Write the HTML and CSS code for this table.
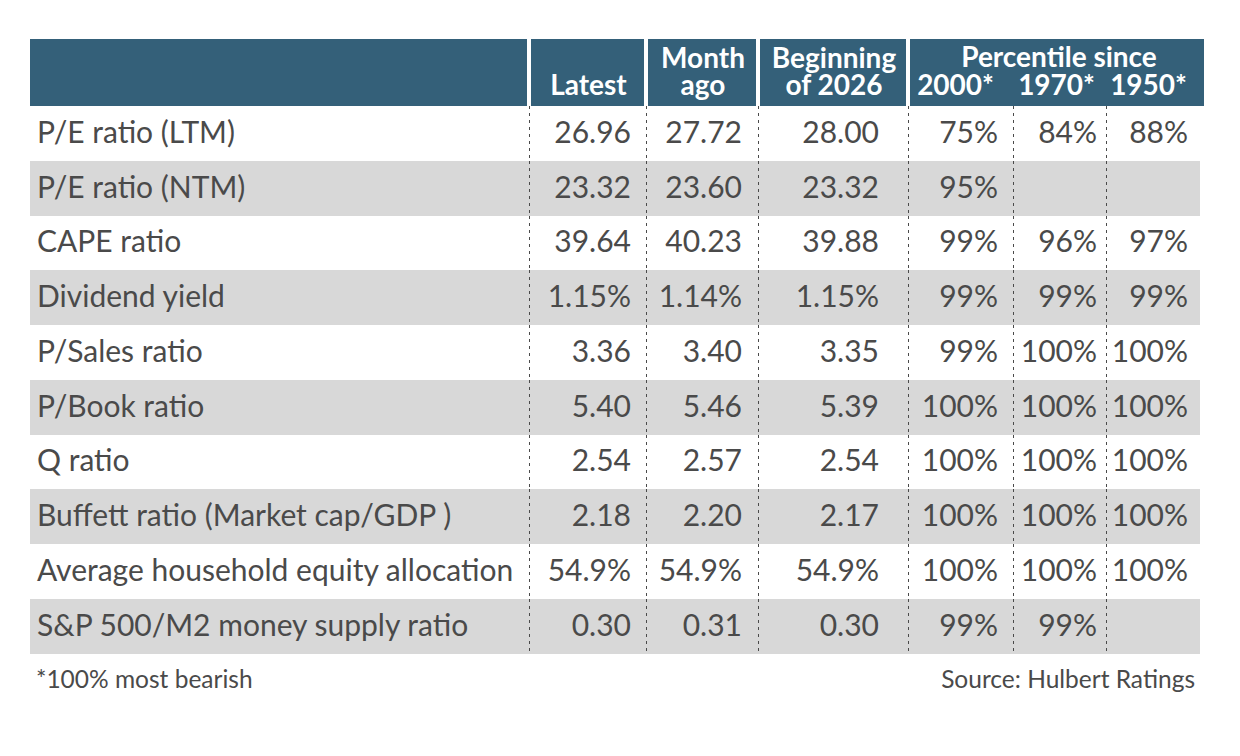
FILE: index.html
```html
<!DOCTYPE html>
<html lang="en">
<head>
<meta charset="utf-8">
<title>Valuation indicators</title>
<link rel="stylesheet" href="styles.css">
</head>
<body>
<div class="wrap">
  <div class="head">
    <div class="hc h-blank"></div>
    <div class="hc h-main h-latest"><span>Latest</span></div>
    <div class="hc h-main h-month"><span>Month</span><span>ago</span></div>
    <div class="hc h-main h-begin"><span>Beginning</span><span>of 2026</span></div>
    <div class="hc h-group"><span>Percentile since</span></div>
    <div class="hc h-yr y2000"><span>2000*</span></div>
    <div class="hc h-yr y1970"><span>1970*</span></div>
    <div class="hc h-yr y1950"><span>1950*</span></div>
  </div>
  <table class="val">
    <colgroup>
      <col class="c-label"><col class="c-latest"><col class="c-month"><col class="c-begin"><col class="c-p2000"><col class="c-p1970"><col class="c-p1950">
    </colgroup>
    <tbody>
      <tr><td>P/E ratio (LTM)</td><td>26.96</td><td>27.72</td><td>28.00</td><td>75%</td><td>84%</td><td>88%</td></tr>
      <tr class="alt"><td>P/E ratio (NTM)</td><td>23.32</td><td>23.60</td><td>23.32</td><td>95%</td><td></td><td></td></tr>
      <tr><td>CAPE ratio</td><td>39.64</td><td>40.23</td><td>39.88</td><td>99%</td><td>96%</td><td>97%</td></tr>
      <tr class="alt"><td>Dividend yield</td><td>1.15%</td><td>1.14%</td><td>1.15%</td><td>99%</td><td>99%</td><td>99%</td></tr>
      <tr><td>P/Sales ratio</td><td>3.36</td><td>3.40</td><td>3.35</td><td>99%</td><td>100%</td><td>100%</td></tr>
      <tr class="alt"><td>P/Book ratio</td><td>5.40</td><td>5.46</td><td>5.39</td><td>100%</td><td>100%</td><td>100%</td></tr>
      <tr><td>Q ratio</td><td>2.54</td><td>2.57</td><td>2.54</td><td>100%</td><td>100%</td><td>100%</td></tr>
      <tr class="alt"><td>Buffett ratio (Market cap/GDP )</td><td>2.18</td><td>2.20</td><td>2.17</td><td>100%</td><td>100%</td><td>100%</td></tr>
      <tr><td>Average household equity allocation</td><td>54.9%</td><td>54.9%</td><td>54.9%</td><td>100%</td><td>100%</td><td>100%</td></tr>
      <tr class="alt"><td>S&amp;P 500/M2 money supply ratio</td><td>0.30</td><td>0.31</td><td>0.30</td><td>99%</td><td>99%</td><td></td></tr>
    </tbody>
  </table>
  <div class="foot">
    <span>*100% most bearish</span>
    <span>Source: Hulbert Ratings</span>
  </div>
</div>
</body>
</html>
```

FILE: styles.css
```css
html, body {
  margin: 0;
  padding: 0;
  background: #ffffff;
}

body {
  font-family: Lato, "Open Sans", "Liberation Sans", sans-serif;
  color: #4a4a4a;
}

.wrap {
  width: 1170px;
  padding: 39px 0 0 30px;
}

/* header */
.head {
  display: grid;
  grid-template-columns: 499px 117px 112px 150px 105px 93px 94px;
  grid-template-rows: 31px 36px;
  color: #ffffff;
  font-weight: 700;
  font-size: 28px;
  line-height: 27px;
  white-space: nowrap;
}

.hc {
  background: #346079;
  display: flex;
  flex-direction: column;
  align-items: center;
  justify-content: flex-end;
  box-sizing: border-box;
}

.h-blank {
  grid-column: 1;
  grid-row: 1 / 3;
}

.h-main {
  grid-row: 1 / 3;
  border-left: 4px solid #ffffff;
  margin-left: -2px;
  padding-bottom: 8px;
}

.h-latest { grid-column: 2; }
.h-month { grid-column: 3; }
.h-begin { grid-column: 4; }

.h-group {
  grid-column: 5 / 8;
  grid-row: 1;
  border-left: 4px solid #ffffff;
  margin-left: -2px;
  margin-right: -4px;
  padding-left: 4px;
}

.h-yr {
  grid-row: 2;
  align-items: flex-end;
  padding-bottom: 8px;
}

.y2000 {
  grid-column: 5;
  border-left: 4px solid #ffffff;
  margin-left: -2px;
  padding-right: 19px;
}

.y1970 {
  grid-column: 6;
  padding-right: 11px;
}

.y1950 {
  grid-column: 7;
  margin-right: -4px;
  padding-right: 17px;
}

/* body */
.val {
  width: 1170px;
  table-layout: fixed;
  border-collapse: collapse;
  border-spacing: 0;
}

.c-label { width: 499px; }
.c-latest { width: 117px; }
.c-month { width: 112px; }
.c-begin { width: 150px; }
.c-p2000 { width: 105px; }
.c-p1970 { width: 93px; }
.c-p1950 { width: 94px; }

.val td {
  font-size: 30px;
  height: 49.75px;
  padding: 0 0 5px 0;
  vertical-align: middle;
  text-align: right;
  white-space: nowrap;
  line-height: 30px;
}

.val td:first-child {
  text-align: left;
  padding-left: 7px;
}

.val td + td {
  background-image: repeating-linear-gradient(to bottom, #4a4a4a 0 3px, transparent 3px 7px);
  background-size: 2px 100%;
  background-repeat: no-repeat;
  background-position: -1px 0;
}

.val td:nth-child(2) { padding-right: 15px; }
.val td:nth-child(3) { padding-right: 16px; }
.val td:nth-child(4) { padding-right: 29px; }
.val td:nth-child(5) { padding-right: 15px; }
.val td:nth-child(6) { padding-right: 9px; }
.val td:nth-child(7) { padding-right: 12px; }

.val tr.alt td {
  background-color: #d8d8d8;
}

.foot {
  display: flex;
  justify-content: space-between;
  padding: 11px 5px 0 6px;
  font-size: 24.5px;
  line-height: 28px;
}
```
